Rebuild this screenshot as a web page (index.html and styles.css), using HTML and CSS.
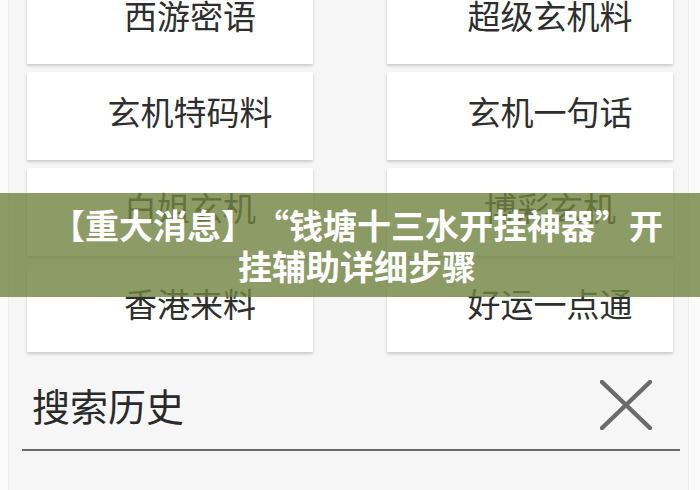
FILE: index.html
```html
<!DOCTYPE html>
<html lang="zh-CN">
<head>
<meta charset="utf-8">
<title>玄机</title>
<link rel="stylesheet" href="styles.css">
</head>
<body>
<div class="screen">
  <div class="grid">
    <div class="card"><span>西游密语</span></div>
    <div class="card"><span>超级玄机料</span></div>
    <div class="card"><span>玄机特码料</span></div>
    <div class="card"><span>玄机一句话</span></div>
    <div class="card"><span>白姐玄机</span></div>
    <div class="card"><span>博彩玄机</span></div>
    <div class="card"><span>香港来料</span></div>
    <div class="card"><span>好运一点通</span></div>
  </div>
  <div class="history">
    <span class="history-title">搜索历史</span>
    <svg class="close" width="52" height="50" viewBox="0 0 52 50">
      <line x1="2" y1="2" x2="50" y2="48"/>
      <line x1="50" y1="2" x2="2" y2="48"/>
    </svg>
  </div>
</div>
<div class="banner">
  <p class="banner-text">【重大消息】<span class="q q-open">“</span>钱塘十三水开挂神器<span class="q q-close">”</span>开挂辅助详细步骤</p>
</div>
</body>
</html>
```

FILE: styles.css
```css
html, body {
  margin: 0;
  padding: 0;
  background: #fbfbfb;
  width: 700px;
  height: 490px;
  overflow: hidden;
  font-family: "Noto Sans CJK SC", "Noto Sans", sans-serif;
}

.screen {
  margin-left: 8px;
  width: 681px;
  height: 490px;
  background: #f6f6f6;
  border-left: 1px solid #ececec;
  border-right: 1px solid #ececec;
  box-sizing: border-box;
  overflow: hidden;
}

.grid {
  display: grid;
  grid-template-columns: 286px 286px;
  grid-auto-rows: 88px;
  column-gap: 74px;
  row-gap: 8px;
  margin-top: -24px;
  padding-left: 18px;
}

.card {
  background: #ffffff;
  box-shadow: 0 2px 3px rgba(0, 0, 0, 0.18);
  display: flex;
  align-items: center;
  justify-content: center;
  padding-left: 40px;
  padding-bottom: 10px;
  box-sizing: border-box;
  font-size: 33px;
  color: #2e2e2e;
}

.history {
  margin-top: 8px;
  margin-left: 13px;
  width: 658px;
  height: 91px;
  box-sizing: border-box;
  border-bottom: 2px solid #6a6a6a;
  display: flex;
  align-items: center;
  justify-content: space-between;
  padding-left: 10px;
  padding-right: 28px;
}

.history-title {
  font-size: 38px;
  color: #2a2a2a;
  line-height: 1;
}

.close line {
  stroke: #6b6b6b;
  stroke-width: 4.5;
  stroke-linecap: round;
}

.banner {
  position: absolute;
  left: 0;
  top: 193px;
  width: 700px;
  height: 104px;
  background: rgba(112, 130, 65, 0.8);
  display: flex;
  align-items: center;
  justify-content: center;
}

.banner-text {
  margin: 0;
  padding: 0 26px 0 40px;
  font-size: 34px;
  line-height: 41px;
  font-weight: 700;
  color: #ffffff;
  text-align: center;
}

.q {
  display: inline-block;
  width: 1em;
}

.q-open {
  text-align: right;
}

.q-close {
  text-align: left;
}
```
